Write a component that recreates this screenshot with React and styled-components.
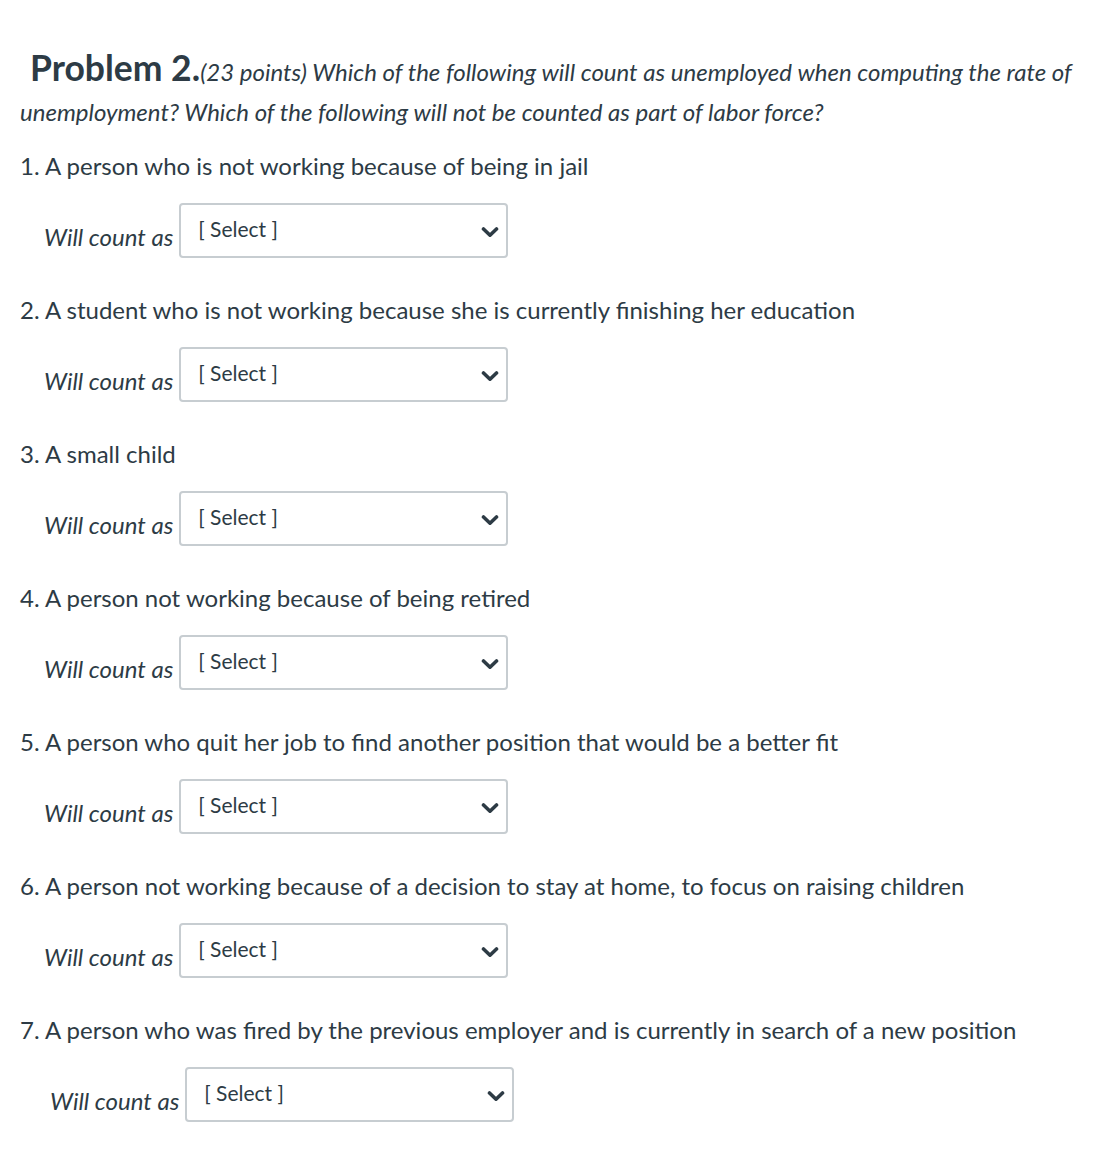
import React from 'react'
import styled, { createGlobalStyle } from "styled-components"

const Global = createGlobalStyle`
body{
    margin: 0;
    background: #fff;
    font-family: Lato, "Open Sans", sans-serif;
    color: #2d3b45;
}
`

const questions = [
    { text: "1. A person who is not working because of being in jail" },
    { text: "2. A student who is not working because she is currently finishing her education" },
    { text: "3. A small child" },
    { text: "4. A person not working because of being retired" },
    { text: "5. A person who quit her job to find another position that would be a better fit" },
    { text: "6. A person not working because of a decision to stay at home, to focus on raising children" },
    { text: "7. A person who was fired by the previous employer and is currently in search of a new position", shift: 6 },
]

function Chevron() {
    return (
        <svg width="18" height="12" viewBox="0 0 18 12">
            <polyline points="2.5,3 9,9.2 15.5,3" fill="none" stroke="#2d3b45" strokeWidth="3.6" strokeLinecap="round" strokeLinejoin="round" />
        </svg>
    )
}

export default function App() {
    return (
        <Page>
            <Global />
            <Intro>
                <Title>Problem 2.</Title>
                <em>(23 points) Which of the following will count as unemployed when computing the rate of unemployment? Which of the following will not be counted as part of labor force?</em>
            </Intro>
            {questions.map((q, i) => (
                <Item key={i}>
                    <Question>{q.text}</Question>
                    <Row shift={q.shift || 0}>
                        <Label>Will count as</Label>
                        <Select>
                            <span>[ Select ]</span>
                            <Chevron />
                        </Select>
                    </Row>
                </Item>
            ))}
        </Page>
    )
}

const Page = styled.div`
padding: 50px 20px 20px 20px;
width: 1060px;
`
const Intro = styled.p`
margin: 0;
font-size: 24px;
line-height: 40px;
text-indent: 10px;
em{
    font-style: italic;
}
`
const Title = styled.span`
font-size: 35.5px;
line-height: 36px;
font-weight: 700;
`
const Item = styled.div`
margin-top: 18px;
& + & {
    margin-top: 36px;
}
`
const Question = styled.div`
font-size: 24px;
line-height: 32px;
`
const Row = styled.div`
display: flex;
align-items: center;
margin-top: 21px;
padding-left: ${p => 24 + p.shift}px;
`
const Label = styled.span`
font-size: 24px;
font-style: italic;
padding-top: 11px;
margin-right: 6px;
`
const Select = styled.div`
box-sizing: border-box;
width: 329px;
height: 55px;
border: 2px solid #c7cdd1;
border-radius: 4px;
display: flex;
align-items: center;
justify-content: space-between;
padding: 0 7px 0 17px;
font-size: 21px;
span{
    margin-top: -4px;
}
svg{
    margin-top: 2px;
}
`
